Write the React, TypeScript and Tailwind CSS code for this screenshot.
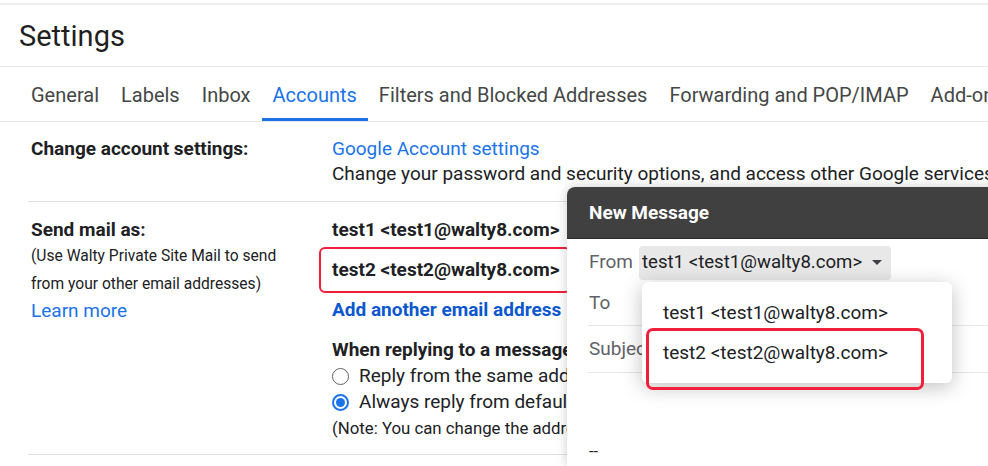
import React from 'react';

const tabs = [
  'General',
  'Labels',
  'Inbox',
  'Accounts',
  'Filters and Blocked Addresses',
  'Forwarding and POP/IMAP',
  'Add-ons',
];

function Radio({ checked }: { checked: boolean }) {
  return checked ? (
    <span className="flex h-[17px] w-[17px] shrink-0 items-center justify-center rounded-full border-2 border-[#1a73e8]">
      <span className="h-[9px] w-[9px] rounded-full bg-[#1a73e8]" />
    </span>
  ) : (
    <span className="h-[17px] w-[17px] shrink-0 rounded-full border-[1.5px] border-[#5f6368]" />
  );
}

function ComposeWindow() {
  return (
    <div className="absolute left-[567px] top-[187px] bottom-0 w-[440px] rounded-tl-[8px] bg-white shadow-[0_0_12px_rgba(0,0,0,0.2)]">
      {/* header */}
      <div className="flex h-[52px] items-center rounded-tl-[8px] border-b border-[#2a2a2a] bg-[#404040] pl-[22px] pt-[1px] text-[19px] font-bold text-white">
        New Message
      </div>

      <div className="relative ml-[21px]">
        {/* From */}
        <div className="flex h-[44px] items-center pt-[3px]">
          <span className="w-[51px] pl-[1px] text-[19px] text-[#5f6368]">From</span>
          <div className="flex h-[34px] w-[252px] items-center justify-between rounded-[4px] bg-[#e8e8e8] pl-[3px] pr-[9px] text-[18.6px] text-[#202124]">
            <span>test1 &lt;test1@walty8.com&gt;</span>
            <svg width="10" height="5" viewBox="0 0 10 5">
              <path d="M0 0h10L5 5z" fill="#3c4043" />
            </svg>
          </div>
        </div>

        {/* To */}
        <div className="flex h-[43px] items-center border-b border-[#e6e6e6] pb-[2px] pl-[1px] text-[19px] text-[#5f6368]">
          To
        </div>

        {/* Subject */}
        <div className="flex h-[47px] items-center border-b border-[#e6e6e6] pl-[1px] text-[19px] text-[#5f6368]">
          Subject
        </div>

        <div className="mt-[67px] pl-[1px] text-[16px] leading-[24px] text-[#202124]">--</div>

        {/* dropdown menu */}
        <div className="absolute left-[54px] top-[43px] h-[101px] w-[310px] rounded-[6px] bg-white pt-[10px] text-[19px] text-[#202124] shadow-[0_4px_20px_rgba(0,0,0,0.25)]">
          <div className="flex h-[41px] items-center pl-[21px] pt-[1px]">test1 &lt;test1@walty8.com&gt;</div>
          <div className="flex h-[41px] items-center pl-[21px]">test2 &lt;test2@walty8.com&gt;</div>
          <div className="absolute left-[4px] top-[46px] h-[62px] w-[278px] rounded-[7px] border-[3px] border-[#f0203c]" />
        </div>
      </div>
    </div>
  );
}

export default function App() {
  return (
    <div className="relative h-[466px] w-[988px] overflow-hidden whitespace-nowrap bg-white font-['Roboto',sans-serif] text-[#202124]">
      <div className="mt-[3px] h-[2px] bg-[#eeeeee]" />

      {/* title */}
      <div className="flex h-[62px] items-center border-b border-[#e6e6e6] pl-[19px] pt-[3px] text-[29px] text-[#1f1f1f]">
        Settings
      </div>

      {/* tabs */}
      <div className="flex h-[55px] items-stretch border-b border-[#e6e6e6] pl-[20px]">
        {tabs.map((tab) => (
          <div
            key={tab}
            className={
              tab === 'Accounts'
                ? 'flex items-center border-b-[3px] border-[#1a73e8] px-[11px] pt-[5px] text-[20px] text-[#1a73e8]'
                : 'flex items-center border-b-[3px] border-transparent px-[11px] pt-[5px] text-[20px] text-[#444746]'
            }
          >
            {tab}
          </div>
        ))}
      </div>

      {/* Change account settings */}
      <div className="ml-[28px] flex border-b border-[#e0e0e0] pb-[15px] pt-[14px] text-[19px] leading-[25px]">
        <div className="w-[304px] shrink-0 pl-[3px] font-bold">Change account settings:</div>
        <div className="flex flex-col">
          <span className="text-[#1a73e8]">Google Account settings</span>
          <span>Change your password and security options, and access other Google services.</span>
        </div>
      </div>

      {/* Send mail as */}
      <div className="ml-[28px] flex border-b border-[#e0e0e0] pb-[13px] pt-[15px] text-[19px] leading-[26px]">
        <div className="w-[304px] shrink-0 pl-[3px]">
          <div className="font-bold">Send mail as:</div>
          <div className="text-[15.6px] leading-[27px]">(Use Walty Private Site Mail to send</div>
          <div className="text-[15.6px] leading-[28px]">from your other email addresses)</div>
          <div className="text-[#1a73e8]">Learn more</div>
        </div>
        <div className="flex shrink-0 flex-col items-start">
          <div className="font-bold">test1 &lt;test1@walty8.com&gt;</div>
          <div className="-ml-[13px] mt-[4px] flex h-[46px] w-[252px] shrink-0 items-center rounded-[6px] border-2 border-[#f0203c] pl-[11px] font-bold">
            test2 &lt;test2@walty8.com&gt;
          </div>
          <div className="mt-[4px] font-bold text-[#0b57d0]">Add another email address</div>
          <div className="mt-[14px] font-bold">When replying to a message:</div>
          <div className="flex items-center gap-[10px]">
            <Radio checked={false} />
            <span>Reply from the same address the message was sent to</span>
          </div>
          <div className="flex items-center gap-[10px]">
            <Radio checked />
            <span>Always reply from default address (currently test1@walty8.com)</span>
          </div>
          <div className="text-[16.8px]">(Note: You can change the address at the time of your reply.)</div>
        </div>
      </div>

      <ComposeWindow />
    </div>
  );
}
